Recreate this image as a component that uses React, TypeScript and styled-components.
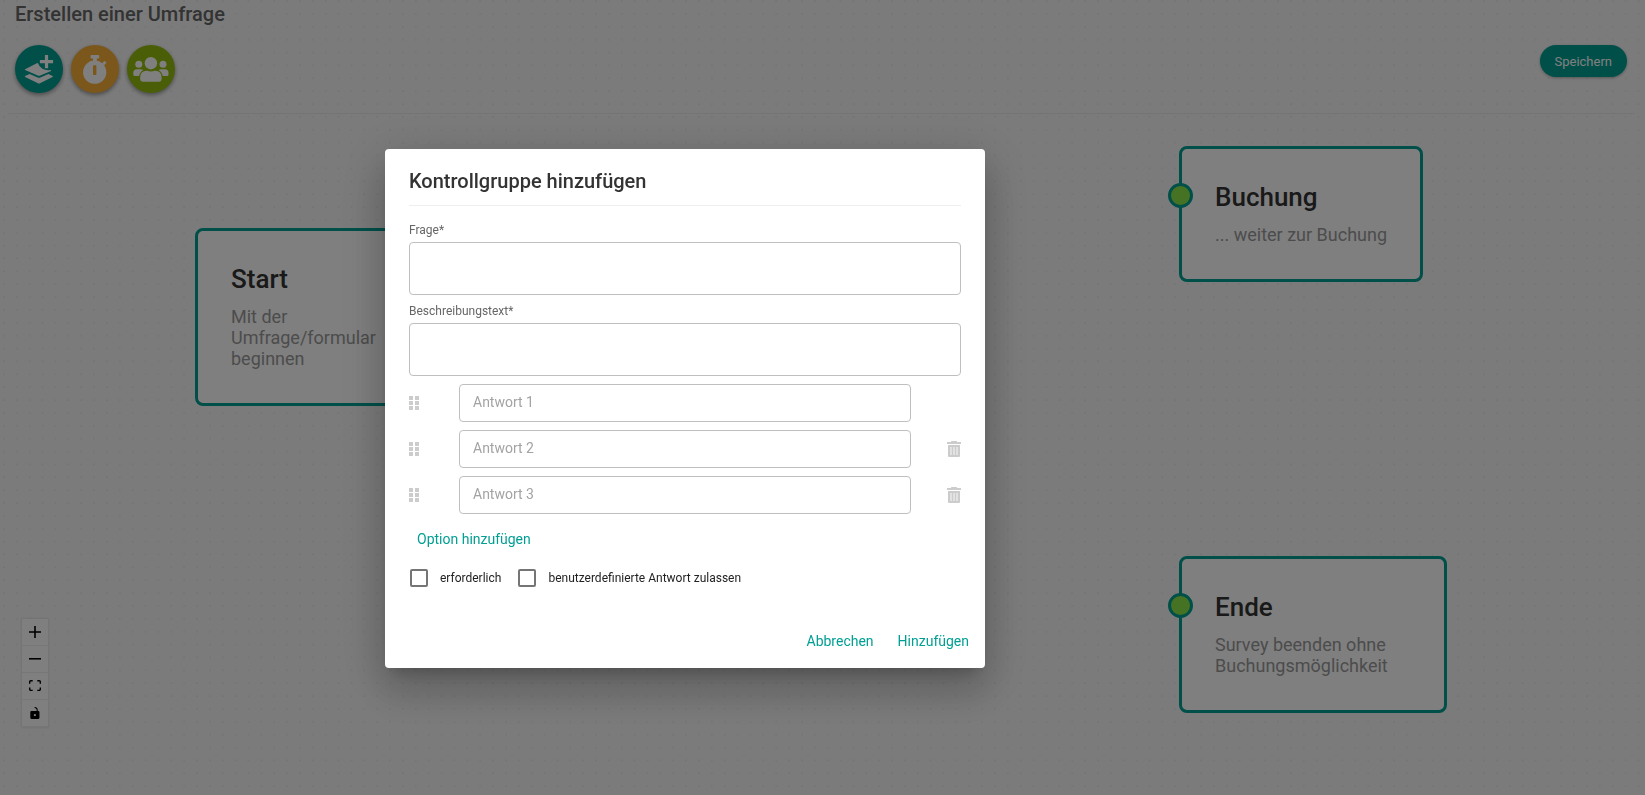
import React from 'react';
import styled, { createGlobalStyle } from 'styled-components';

const TEAL = '#009f93';

const GlobalStyle = createGlobalStyle`
  * { box-sizing: border-box; }
  body {
    margin: 0;
    background: #f7f7f7;
    color: #333;
    font-family: Roboto, "Liberation Sans", sans-serif;
    font-size: 14px;
  }
  h1, h2, h3, p { margin: 0; }
  button, input, textarea { font-family: inherit; margin: 0; }
  button { border: 0; cursor: pointer; }
`;

const Page = styled.main`
  position: relative;
  min-height: 100vh;
  padding: 0 10px 0 8px;
  overflow: hidden;
`;

const Dots = styled.svg`
  position: absolute;
  inset: 0;
  width: 100%;
  height: 100%;
`;

const Header = styled.header`
  position: relative;
  padding: 2px 8px 20px 7px;
  border-bottom: 1px solid #e9e9e9;
`;

const PageTitle = styled.h1`
  font-size: 20px;
  line-height: 24px;
  font-weight: 500;
  color: #666;
`;

const Toolbar = styled.div`
  display: flex;
  align-items: flex-start;
  gap: 8px;
  margin-top: 19px;
`;

const RoundButton = styled.button<{ $color: string }>`
  width: 48px;
  height: 48px;
  padding: 0;
  border-radius: 50%;
  background: ${(p) => p.$color};
  box-shadow: 0 2px 4px rgba(0, 0, 0, 0.4);
  svg { display: block; }
`;

const SaveButton = styled.button`
  margin-left: auto;
  height: 32px;
  padding: 0 15px 0 14px;
  border-radius: 16px;
  background: ${TEAL};
  color: #fff;
  font-size: 13px;
  box-shadow: 0 1px 3px rgba(0, 0, 0, 0.3);
`;

const Node = styled.article<{ $x: number; $y: number; $w: number }>`
  position: absolute;
  left: ${(p) => p.$x}px;
  top: ${(p) => p.$y}px;
  width: ${(p) => p.$w}px;
  padding: 32px 32px 34px 33px;
  border: 3px solid ${TEAL};
  border-radius: 8px;
  background: #fff;
`;

const NodeTitle = styled.h3`
  font-size: 26px;
  line-height: 32px;
  font-weight: 500;
`;

const NodeText = styled.p`
  margin-top: 11px;
  font-size: 18px;
  line-height: 21px;
  color: #999;
`;

const Handle = styled.span`
  position: absolute;
  left: -14px;
  top: 34px;
  width: 25px;
  height: 25px;
  border: 3px solid ${TEAL};
  border-radius: 50%;
  background: #8ae646;
`;

const Controls = styled.div`
  position: absolute;
  left: 22px;
  bottom: 68px;
  display: flex;
  flex-direction: column;
  box-shadow: 0 0 2px 1px rgba(0, 0, 0, 0.08);
`;

const ControlButton = styled.button`
  display: flex;
  align-items: center;
  justify-content: center;
  width: 26px;
  height: 27px;
  padding: 0;
  background: #fefefe;
  border-bottom: 1px solid #eee;
  svg { width: 12px; max-height: 12px; }
`;

const Scrim = styled.div`
  position: fixed;
  inset: 0;
  display: flex;
  align-items: flex-start;
  justify-content: center;
  padding: 149px 275px 0 0;
  background: rgba(0, 0, 0, 0.5);
  overflow: auto;
`;

const Dialog = styled.form`
  width: 600px;
  padding: 20px 24px 9px;
  border-radius: 4px;
  background: #fff;
  box-shadow: 0 11px 15px -7px rgba(0, 0, 0, 0.2), 0 24px 38px 3px rgba(0, 0, 0, 0.14),
    0 9px 46px 8px rgba(0, 0, 0, 0.12);
`;

const DialogTitle = styled.h2`
  padding-bottom: 12px;
  border-bottom: 1px solid #eee;
  font-size: 20px;
  line-height: 24px;
  font-weight: 500;
`;

const Fields = styled.div`
  display: flex;
  flex-direction: column;
  padding: 16px 0 8px;
`;

const FieldLabel = styled.label`
  padding-bottom: 4px;
  font-size: 12px;
  line-height: 16px;
  color: #666;
`;

const TextArea = styled.textarea`
  display: block;
  height: 53px;
  padding: 8px 12px;
  border: 1px solid #bfbfbf;
  border-radius: 4px;
  font-size: 14px;
  resize: none;
  & + label { margin-top: 8px; }
`;

const Answers = styled.div`
  display: flex;
  flex-direction: column;
  gap: 8px;
`;

const AnswerRow = styled.div`
  display: grid;
  grid-template-columns: 50px 1fr 50px;
  align-items: center;
`;

const AnswerInput = styled.input`
  width: 100%;
  height: 38px;
  padding: 0 13px 2px;
  border: 1px solid #bfbfbf;
  border-radius: 4px;
  font-size: 14px;
  &::placeholder { color: #a3a3a3; }
`;

const IconButton = styled.button<{ $end?: boolean }>`
  padding: 0;
  background: none;
  justify-self: ${(p) => (p.$end ? 'end' : 'start')};
  svg { display: block; }
`;

const TextButton = styled.button`
  height: 36px;
  padding: 0 8px;
  background: none;
  color: ${TEAL};
  font-size: 14px;
`;

const AddOption = styled.div`
  margin-top: 7px;
`;

const Checks = styled.div`
  display: flex;
  gap: 16px;
  margin-top: 11px;
`;

const CheckLabel = styled.label`
  display: flex;
  align-items: center;
  gap: 12px;
  font-size: 12px;
  line-height: 20px;
  color: #222;
`;

const CheckBox = styled.input`
  appearance: none;
  width: 18px;
  height: 18px;
  margin: 0 0 0 1px;
  border: 2px solid #757575;
  border-radius: 2px;
  &:checked { background: ${TEAL}; }
`;

const Actions = styled.footer`
  display: flex;
  justify-content: flex-end;
  gap: 8px;
  margin: 35px -16px 0 0;
`;

const LayersPlusIcon = () => (
  <svg width="48" height="48" viewBox="0 0 48 48" fill="#fff" aria-hidden="true">
    <path d="M21.8 18.2 L10.1 24.2 Q9.6 24.7 10.1 25.1 L22.8 30.6 Q24 31 25.2 30.6 L36 26 Q36.4 25.4 35.6 25 Q30.6 25.6 27.4 23.8 Q24 21.6 23.2 18.4 Q22.6 17.9 21.8 18.2Z" />
    <path d="M10.1 31 L14.6 28.9 L22.6 32.4 Q24 32.9 25.4 32.4 L33.4 28.9 L37.6 31 Q38.2 31.5 37.6 32 L25 38.3 Q24 38.7 23 38.3 L10.1 32 Q9.5 31.5 10.1 31Z" />
    <path d="M29.9 10h3.2v4.9h5v3.4h-5v4.9h-3.2v-4.9h-5v-3.4h5z" />
  </svg>
);

const StopwatchIcon = ({ color }: { color: string }) => (
  <svg width="48" height="48" viewBox="0 0 48 48" fill="#fff" aria-hidden="true">
    <circle cx="23.7" cy="27.2" r="11.6" />
    <path d="M20.4 10h7q.8 0 .8.8v2q0 .8-.8.8h-1.6V17h-3.8v-3.4h-1.6q-.8 0-.8-.8v-2q0-.8.8-.8z" />
    <path d="M31 18.4l2-2.2q.6-.4 1 0l1.1 1.1q.4.5 0 1l-2.1 2.2z" />
    <rect x="22" y="20.3" width="3.4" height="9.6" rx=".6" fill={color} />
  </svg>
);

const UsersIcon = () => (
  <svg width="48" height="48" viewBox="0 0 48 48" fill="#fff" aria-hidden="true">
    <circle cx="11.8" cy="19.2" r="3.5" />
    <circle cx="36" cy="19.2" r="3.5" />
    <circle cx="23.9" cy="18.2" r="6.2" />
    <path d="M10 24.2h3.6q1.4 0 2.5 1-3.4 1.9-4 5.8H7.6q-1.3 0-1.3-1.4v-1.9q0-3.5 3.7-3.5z" />
    <path d="M37.8 24.2h-3.6q-1.4 0-2.5 1 3.4 1.9 4 5.8h4.5q1.3 0 1.3-1.4v-1.9q0-3.5-3.7-3.5z" />
    <path d="M19.6 25.8h.5q3.8 1.6 7.6 0h.5q6.3.3 6.4 6.4v2.1q0 2.4-2.4 2.4H15.6q-2.4 0-2.4-2.4v-2.1q.1-6.1 6.4-6.4z" />
  </svg>
);

const GripIcon = () => (
  <svg width="10" height="14" viewBox="0 0 10 14" fill="#ccc" aria-hidden="true">
    {[0, 5, 10].map((y) => (
      <path key={y} d={`M0 ${y}h4v4H0zM6 ${y}h4v4H6z`} />
    ))}
  </svg>
);

const TrashIcon = () => (
  <svg width="14" height="16" viewBox="0 0 14 16" fill="#ccc" aria-hidden="true">
    <path d="M4 1V.6Q4 0 4.6 0h4.8q.6 0 .6.6V1h4v2H0V1z" />
    <path d="M1 4h12v11q0 1-1 1H2q-1 0-1-1z" />
    <path d="M3 6h2v8H3zM6 6h2v8H6zM9 6h2v8H9z" fill="#e2e2e2" />
  </svg>
);

const controls = [
  { label: 'Vergrößern', box: '0 0 32 32', d: 'M32 18.133H18.133V32h-4.266V18.133H0v-4.266h13.867V0h4.266v13.867H32z' },
  { label: 'Verkleinern', box: '0 0 32 5', d: 'M0 0h32v4.2H0z' },
  {
    label: 'Ansicht anpassen',
    box: '0 0 32 30',
    d: 'M3.692 4.63c0-.53.4-.938.939-.938h5.215V0H4.708C2.13 0 0 2.054 0 4.63v5.216h3.692V4.631zM27.354 0h-5.2v3.692h5.17c.53 0 .984.4.984.939v5.215H32V4.631A4.624 4.624 0 0027.354 0zm.954 24.83c0 .532-.4.94-.939.94h-5.215v3.768h5.215c2.577 0 4.631-2.13 4.631-4.707v-5.139h-3.692v5.139zm-23.677.94c-.531 0-.939-.4-.939-.94v-5.138H0v5.139c0 2.577 2.13 4.707 4.708 4.707h5.138V25.77H4.631z',
  },
  {
    label: 'Sperren',
    box: '0 0 25 32',
    d: 'M21.333 10.667H19.81V7.619C19.81 3.429 16.38 0 12.19 0c-4.114 1.828-1.37 2.133.305 2.438 1.676.305 4.42 2.59 4.42 5.181v3.048H3.047A3.056 3.056 0 000 13.714v15.238A3.056 3.056 0 003.048 32h18.285a3.056 3.056 0 003.048-3.048V13.714a3.056 3.056 0 00-3.047-3.047zM12.19 24.533a3.056 3.056 0 01-3.047-3.047 3.056 3.056 0 013.047-3.048 3.056 3.056 0 013.048 3.048 3.056 3.056 0 01-3.048 3.047z',
  },
];

const nodes = [
  { title: 'Start', text: 'Mit der Umfrage/formular beginnen', x: 195, y: 228, w: 244, handle: false },
  { title: 'Buchung', text: '... weiter zur Buchung', x: 1179, y: 146, w: 244, handle: true },
  { title: 'Ende', text: 'Survey beenden ohne Buchungsmöglichkeit', x: 1179, y: 556, w: 268, handle: true },
];

export default function App() {
  return (
    <>
      <GlobalStyle />
      <Page>
        <Dots aria-hidden="true">
          <pattern id="dots" x="3" y="0" width="12.87" height="12.87" patternUnits="userSpaceOnUse">
            <circle cx="1" cy="1" r="0.6" fill="#c4c4c4" />
          </pattern>
          <rect width="100%" height="100%" fill="url(#dots)" />
        </Dots>
        <Header>
          <PageTitle>Erstellen einer Umfrage</PageTitle>
          <Toolbar>
            <RoundButton type="button" $color={TEAL} aria-label="Frage hinzufügen"><LayersPlusIcon /></RoundButton>
            <RoundButton type="button" $color="#f9ae39" aria-label="Zeit"><StopwatchIcon color="#f9ae39" /></RoundButton>
            <RoundButton type="button" $color="#93bd0c" aria-label="Kontrollgruppe"><UsersIcon /></RoundButton>
            <SaveButton type="button">Speichern</SaveButton>
          </Toolbar>
        </Header>
        {nodes.map((n) => (
          <Node key={n.title} $x={n.x} $y={n.y} $w={n.w}>
            {n.handle && <Handle />}
            <NodeTitle>{n.title}</NodeTitle>
            <NodeText>{n.text}</NodeText>
          </Node>
        ))}
        <Controls>
          {controls.map((c) => (
            <ControlButton key={c.label} type="button" aria-label={c.label}>
              <svg viewBox={c.box} aria-hidden="true"><path d={c.d} /></svg>
            </ControlButton>
          ))}
        </Controls>
      </Page>
      <Scrim>
        <Dialog role="dialog" aria-modal="true" aria-labelledby="dialog-title" onSubmit={(e) => e.preventDefault()}>
          <DialogTitle id="dialog-title">Kontrollgruppe hinzufügen</DialogTitle>
          <Fields>
            <FieldLabel htmlFor="frage">Frage*</FieldLabel>
            <TextArea id="frage" />
            <FieldLabel htmlFor="beschreibung">Beschreibungstext*</FieldLabel>
            <TextArea id="beschreibung" />
          </Fields>
          <Answers>
            {[1, 2, 3].map((n) => (
              <AnswerRow key={n}>
                <IconButton type="button" aria-label={`Antwort ${n} verschieben`}><GripIcon /></IconButton>
                <AnswerInput placeholder={`Antwort ${n}`} aria-label={`Antwort ${n}`} />
                {n > 1 && <IconButton type="button" $end aria-label={`Antwort ${n} löschen`}><TrashIcon /></IconButton>}
              </AnswerRow>
            ))}
          </Answers>
          <AddOption>
            <TextButton type="button">Option hinzufügen</TextButton>
          </AddOption>
          <Checks>
            <CheckLabel><CheckBox type="checkbox" />erforderlich</CheckLabel>
            <CheckLabel><CheckBox type="checkbox" />benutzerdefinierte Antwort zulassen</CheckLabel>
          </Checks>
          <Actions>
            <TextButton type="button">Abbrechen</TextButton>
            <TextButton type="submit">Hinzufügen</TextButton>
          </Actions>
        </Dialog>
      </Scrim>
    </>
  );
}
